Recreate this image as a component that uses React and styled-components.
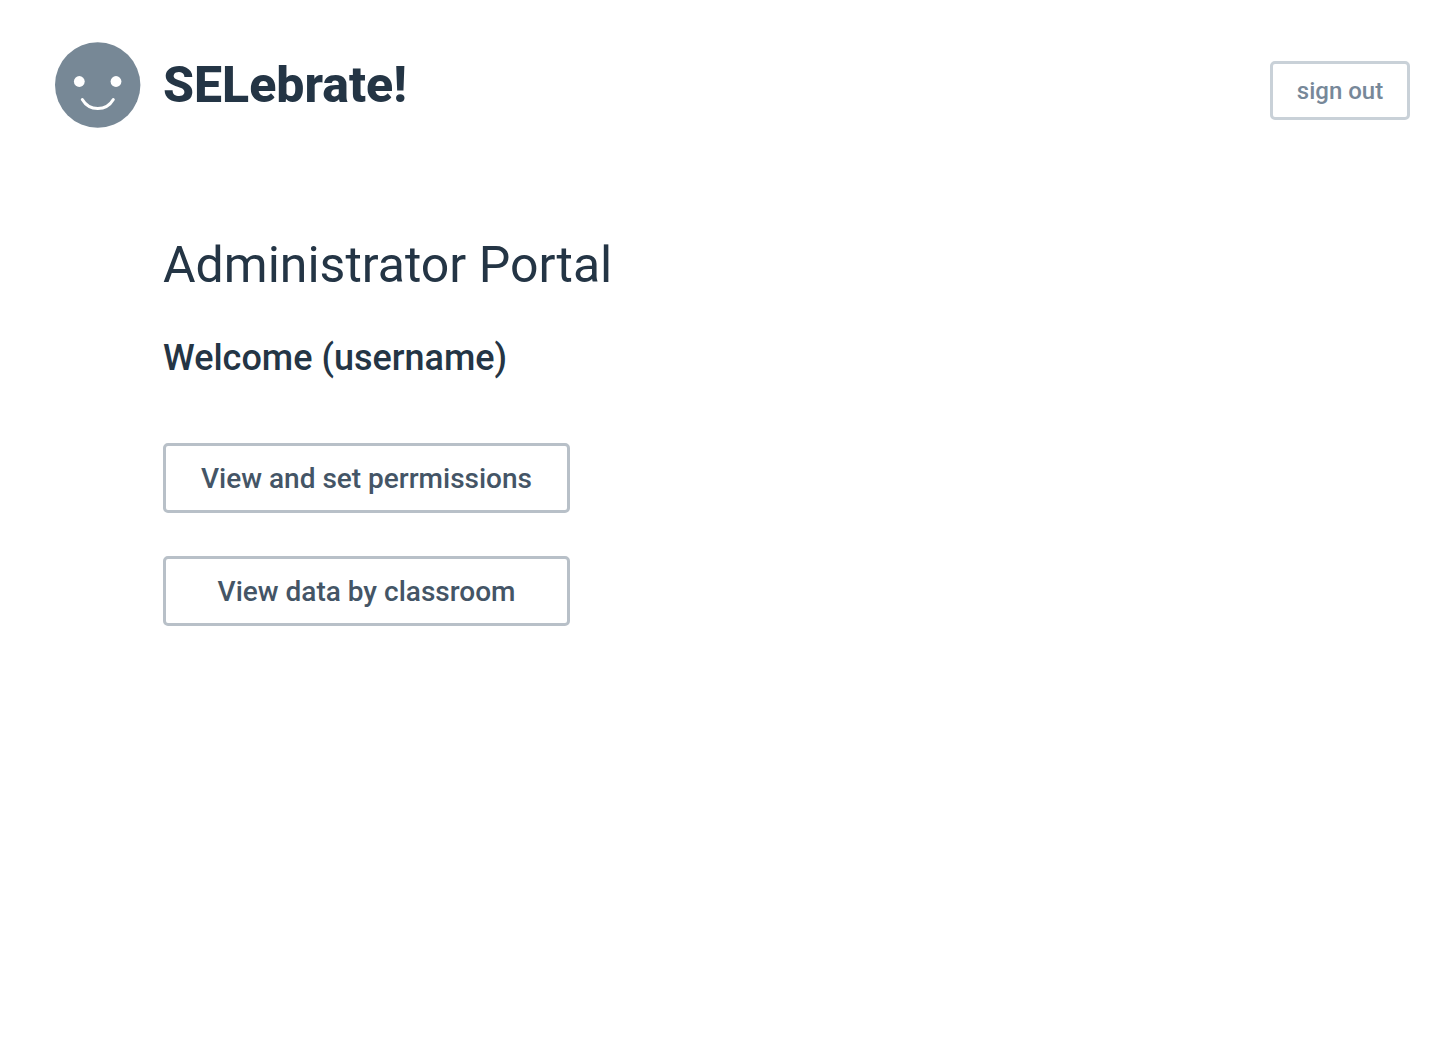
import React from "react";
import styled, { createGlobalStyle } from "styled-components";

const GlobalStyle = createGlobalStyle`
  * { box-sizing: border-box; }
  body {
    margin: 0;
    background: #ffffff;
    color: #243545;
    font-family: Roboto, "Liberation Sans", sans-serif;
  }
`;

const Header = styled.header`
  display: flex;
  align-items: flex-start;
  justify-content: space-between;
  padding: 42px 30px 0 55px;
`;

const Brand = styled.div`
  display: flex;
  align-items: center;
  gap: 22px;
`;

const Logo = styled.svg`
  display: block;
  width: 86px;
  height: 86px;
`;

const BrandName = styled.span`
  font-size: 50px;
  line-height: 60px;
  font-weight: 800;
`;

const Account = styled.div`
  padding-top: 19px;
`;

const Main = styled.main`
  display: flex;
  flex-direction: column;
  align-items: flex-start;
  padding: 107px 30px 40px 163px;
`;

const Title = styled.h1`
  margin: 0;
  font-size: 50px;
  line-height: 60px;
  font-weight: 400;
`;

const Welcome = styled.h2`
  margin: 39px 0 0;
  font-size: 36px;
  line-height: 48px;
  font-weight: 500;
`;

const Button = styled.button`
  display: block;
  background: #ffffff;
  border: 3px solid ${(p) => (p.$small ? "#c9d1d8" : "#b8c0c8")};
  border-radius: 5px;
  color: ${(p) => (p.$small ? "#778899" : "#445566")};
  font-family: inherit;
  font-size: ${(p) => (p.$small ? 24 : 28)}px;
  font-weight: 500;
  width: ${(p) => (p.$small ? "140px" : "100%")};
  height: ${(p) => (p.$small ? 59 : 70)}px;
  padding: 0;
  cursor: pointer;
`;

const Actions = styled.nav`
  display: flex;
  flex-direction: column;
  gap: 43px;
  width: 407px;
  max-width: 100%;
  margin-top: 61px;
`;

export default function App() {
  return (
    <>
      <GlobalStyle />
      <Header>
        <Brand>
          <Logo viewBox="0 0 86 86" aria-hidden="true">
            <circle cx="42.7" cy="43" r="42.7" fill="#778896" />
            <circle cx="24.3" cy="39.5" r="5.4" fill="#fff" />
            <circle cx="61" cy="39.5" r="5.4" fill="#fff" />
            <path d="M27.3 57.5C34.3 69.5 51.3 69.5 58.3 57.5" fill="none" stroke="#fff" strokeWidth="3" strokeLinecap="round" />
          </Logo>
          <BrandName>SELebrate!</BrandName>
        </Brand>
        <Account>
          <Button type="button" $small>sign out</Button>
        </Account>
      </Header>
      <Main>
        <Title>Administrator Portal</Title>
        <Welcome>Welcome (username)</Welcome>
        <Actions>
          <Button type="button">View and set perrmissions</Button>
          <Button type="button">View data by classroom</Button>
        </Actions>
      </Main>
    </>
  );
}
